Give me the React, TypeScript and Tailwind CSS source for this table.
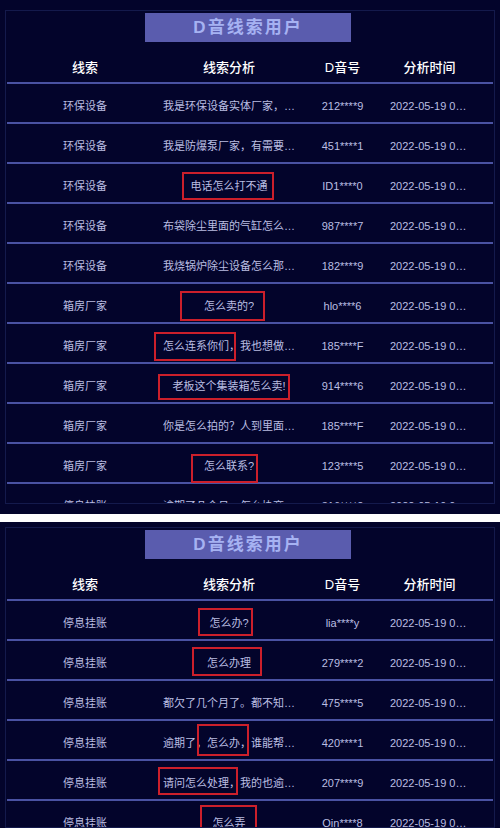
type Row = {
  tag: string;
  text: string;
  id: string;
  time: string;
  box?: string;
};

const font = "font-['Liberation_Sans','Noto_Sans_CJK_SC',sans-serif]";

const topRows: Row[] = [
  { tag: "环保设备", text: "我是环保设备实体厂家，有需要的联系我", id: "212****9", time: "2022-05-19 09:21:36" },
  { tag: "环保设备", text: "我是防爆泵厂家，有需要的联系我", id: "451****1", time: "2022-05-19 09:18:02" },
  { tag: "环保设备", text: "电话怎么打不通", id: "ID1****0", time: "2022-05-19 09:15:47", box: "left-[19px] w-[92px] top-[8px] h-[28px]" },
  { tag: "环保设备", text: "布袋除尘里面的气缸怎么换啊", id: "987****7", time: "2022-05-19 09:11:20" },
  { tag: "环保设备", text: "我烧锅炉除尘设备怎么那么费电", id: "182****9", time: "2022-05-19 09:08:55" },
  { tag: "箱房厂家", text: "怎么卖的?", id: "hlo****6", time: "2022-05-19 09:05:13", box: "left-[17px] w-[85px] top-[7px] h-[30px]" },
  { tag: "箱房厂家", text: "怎么连系你们，我也想做这个", id: "185****F", time: "2022-05-19 09:02:40", box: "left-[-9px] w-[82px] top-[8px] h-[29px]" },
  { tag: "箱房厂家", text: "老板这个集装箱怎么卖!", id: "914****6", time: "2022-05-19 08:59:31", box: "left-[-5px] w-[132px] top-[10px] h-[26px]" },
  { tag: "箱房厂家", text: "你是怎么拍的？人到里面去了吗", id: "185****F", time: "2022-05-19 08:56:18" },
  { tag: "箱房厂家", text: "怎么联系?", id: "123****5", time: "2022-05-19 08:52:07", box: "left-[28px] w-[67px] top-[10px] h-[29px]" },
  { tag: "停息挂账", text: "逾期了几个月，怎么协商还款", id: "316****2", time: "2022-05-19 08:49:44" },
];

const bottomRows: Row[] = [
  { tag: "停息挂账", text: "怎么办?", id: "lia****y", time: "2022-05-19 09:20:11", box: "left-[35px] w-[55px] top-[7px] h-[28px]" },
  { tag: "停息挂账", text: "怎么办理", id: "279****2", time: "2022-05-19 09:17:35", box: "left-[29px] w-[70px] top-[6px] h-[29px]" },
  { tag: "停息挂账", text: "都欠了几个月了。都不知道怎么办", id: "475****5", time: "2022-05-19 09:14:52" },
  { tag: "停息挂账", text: "逾期了，怎么办，谁能帮帮我", id: "420****1", time: "2022-05-19 09:10:26", box: "left-[34px] w-[52px] top-[3px] h-[32px]" },
  { tag: "停息挂账", text: "请问怎么处理，我的也逾期了", id: "207****9", time: "2022-05-19 09:06:03", box: "left-[-5px] w-[80px] top-[6px] h-[28px]" },
  { tag: "停息挂账", text: "怎么弄", id: "Qin****8", time: "2022-05-19 09:01:49", box: "left-[37px] w-[57px] top-[4px] h-[30px]" },
];

const cols = "grid grid-cols-[156px_132px_95px_79px_1fr]";

function Panel({ rows }: { rows: Row[] }) {
  return (
    <div className="h-full border border-[#141a4c] overflow-hidden">
      <div className="pt-[2px] pl-[139px]">
        <div className="w-[206px] h-[29px] bg-[#5a5cae] flex items-center justify-center">
          <span className="text-[17px] font-bold tracking-[2px] text-[#a6b2f2] leading-none">D音线索用户</span>
        </div>
      </div>
      <div className={`${cols} h-[42px] pt-[12px] mx-[1px] items-center border-b-2 border-[#4a52a3] text-[13px] font-medium text-white`}>
        <div className="text-center">线索</div>
        <div className="text-center">线索分析</div>
        <div className="text-center">D音号</div>
        <div className="text-center">分析时间</div>
        <div />
      </div>
      {rows.map((r, i) => (
        <div key={i} className={`${cols} h-[40px] mx-[1px] border-b-2 border-[#4a52a3] text-[11px] text-[#babee2]`}>
          <div className="pt-[7px] flex items-center justify-center">{r.tag}</div>
          <div className="relative pt-[7px] flex items-center justify-center min-w-0">
            <span className="truncate max-w-full">{r.text}</span>
            {r.box && <span className={`absolute border-2 border-[#cc1f2b] ${r.box}`} />}
          </div>
          <div className="pt-[7px] flex items-center justify-center">{r.id}</div>
          <div className="pt-[7px] flex items-center justify-center min-w-0">
            <span className="truncate max-w-full">{r.time}</span>
          </div>
          <div />
        </div>
      ))}
    </div>
  );
}

export default function App() {
  return (
    <div className={`w-[500px] h-[828px] overflow-hidden bg-white flex flex-col ${font}`}>
      <div className="h-[514px] shrink-0 bg-[#03042b] px-[5px] pt-[10px] pb-[10px]">
        <Panel rows={topRows} />
      </div>
      <div className="flex-1 mt-[8px] bg-[#03042b] px-[5px] pt-[5px] overflow-hidden">
        <Panel rows={bottomRows} />
      </div>
    </div>
  );
}
